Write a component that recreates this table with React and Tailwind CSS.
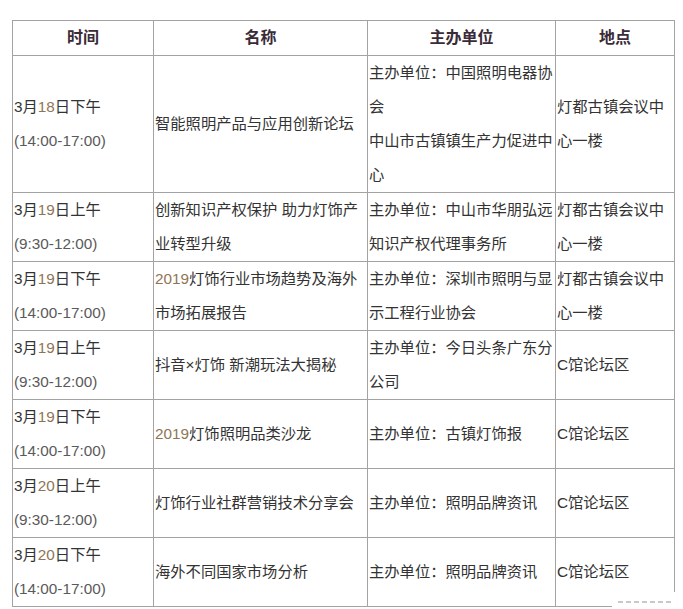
import React from 'react';

const rows = [
  {
    day: '18', half: '下午', time: '(14:00-17:00)',
    name: '智能照明产品与应用创新论坛',
    host: ['主办单位：中国照明电器协会', '中山市古镇镇生产力促进中心'],
    place: '灯都古镇会议中心一楼',
  },
  {
    day: '19', half: '上午', time: '(9:30-12:00)',
    name: '创新知识产权保护 助力灯饰产业转型升级',
    host: ['主办单位：中山市华朋弘远知识产权代理事务所'],
    place: '灯都古镇会议中心一楼',
  },
  {
    day: '19', half: '下午', time: '(14:00-17:00)',
    name: <><span className="text-[#8f7556]">2019</span>灯饰行业市场趋势及海外市场拓展报告</>,
    host: ['主办单位：深圳市照明与显示工程行业协会'],
    place: '灯都古镇会议中心一楼',
  },
  {
    day: '19', half: '上午', time: '(9:30-12:00)',
    name: '抖音×灯饰 新潮玩法大揭秘',
    host: ['主办单位：今日头条广东分公司'],
    place: 'C馆论坛区',
  },
  {
    day: '19', half: '下午', time: '(14:00-17:00)',
    name: <><span className="text-[#8f7556]">2019</span>灯饰照明品类沙龙</>,
    host: ['主办单位：古镇灯饰报'],
    place: 'C馆论坛区',
  },
  {
    day: '20', half: '上午', time: '(9:30-12:00)',
    name: '灯饰行业社群营销技术分享会',
    host: ['主办单位：照明品牌资讯'],
    place: 'C馆论坛区',
  },
  {
    day: '20', half: '下午', time: '(14:00-17:00)',
    name: '海外不同国家市场分析',
    host: ['主办单位：照明品牌资讯'],
    place: 'C馆论坛区',
  },
];

const cell = 'border border-[#a3a3a3] align-middle text-left pl-px pr-0 py-0 leading-[34px] break-all';

export default function App() {
  return (
    <div
      className="relative w-[683px] h-[609px] bg-white text-[#333] overflow-hidden"
      style={{ fontFamily: '"Liberation Sans", "Noto Sans CJK SC", sans-serif' }}
    >
      <div className="pt-[20px] pl-[12px]">
        <table className="border-collapse table-fixed w-[662px] border border-[#555] text-[15.3px]">
          <colgroup>
            <col className="w-[141px]" />
            <col className="w-[214px]" />
            <col className="w-[188px]" />
            <col className="w-[119px]" />
          </colgroup>
          <thead>
            <tr className="h-[35px]">
              {['时间', '名称', '主办单位', '地点'].map((h) => (
                <th key={h} className="border border-[#a3a3a3] text-center font-bold text-[16px] text-[#3a2b38] py-0">
                  {h}
                </th>
              ))}
            </tr>
          </thead>
          <tbody>
            {rows.map((r, i) => (
              <tr key={i}>
                <td className={cell}>
                  <div>3月<span className="text-[#8f7556]">{r.day}</span>日{r.half}</div>
                  <div className="text-[#5a5a5a]">{r.time}</div>
                </td>
                <td className={cell}>{r.name}</td>
                <td className={cell}>
                  {r.host.map((h, j) => (
                    <div key={j}>{h}</div>
                  ))}
                </td>
                <td className={cell}>{r.place}</td>
              </tr>
            ))}
          </tbody>
        </table>
      </div>
      {/* watermark patch */}
      <div className="absolute left-[612px] top-[592px] w-[71px] h-[17px] bg-white flex items-end gap-[3px] pb-[6px] pl-[6px]">
        {[0, 1, 2, 3, 4, 5, 6].map((k) => (
          <span key={k} className="block w-[5px] h-[2px] bg-[#c8c8c8]" />
        ))}
      </div>
    </div>
  );
}
